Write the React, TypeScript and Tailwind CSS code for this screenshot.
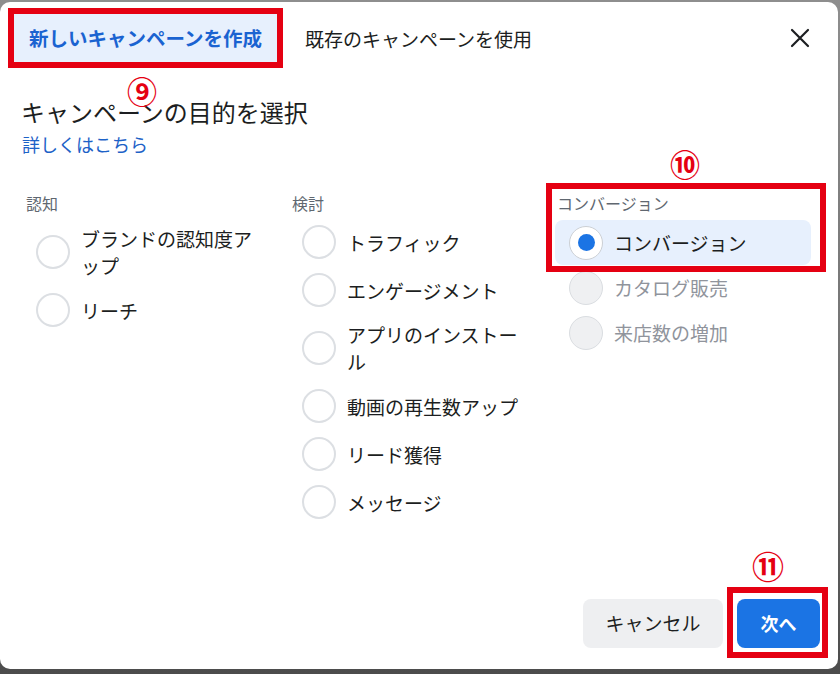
import React from "react";

type Opt = { label: string; disabled?: boolean; selected?: boolean };

const col1: Opt[] = [{ label: "ブランドの認知度アップ" }, { label: "リーチ" }];
const col2: Opt[] = [
  { label: "トラフィック" },
  { label: "エンゲージメント" },
  { label: "アプリのインストール" },
  { label: "動画の再生数アップ" },
  { label: "リード獲得" },
  { label: "メッセージ" },
];
const col3: Opt[] = [
  { label: "コンバージョン", selected: true },
  { label: "カタログ販売", disabled: true },
  { label: "来店数の増加", disabled: true },
];

function Radio({ selected, disabled }: { selected?: boolean; disabled?: boolean }) {
  if (selected) {
    return (
      <div className="w-[34px] h-[34px] shrink-0 rounded-full border-[1.5px] border-[#ccd0d5] bg-white flex items-center justify-center">
        <div className="w-[17px] h-[17px] rounded-full bg-[#1b74e4]" />
      </div>
    );
  }
  if (disabled) {
    return <div className="w-[34px] h-[34px] shrink-0 rounded-full border-[1.5px] border-[#dadde1] bg-[#eff0f2]" />;
  }
  return <div className="w-[34px] h-[34px] shrink-0 rounded-full border-2 border-[#dcdfe3] bg-white" />;
}

function Column({ title, items }: { title: string; items: Opt[] }) {
  return (
    <div className="flex flex-col">
      <div className="text-[16px] leading-[22px] text-[#606770]">{title}</div>
      <div className="mt-[4px] flex flex-col">
        {items.map((it) => (
          <div key={it.label} className="flex items-center gap-[11px] pl-[10px] py-[7px] min-h-[48px]">
            <Radio />
            <div className="text-[19px] leading-[27px] text-[#1c1e21] max-w-[180px] [line-break:loose]">
              {it.label}
            </div>
          </div>
        ))}
      </div>
    </div>
  );
}

function Column3({ title, items }: { title: string; items: Opt[] }) {
  return (
    <div className="flex flex-col">
      <div className="text-[16px] leading-[22px] text-[#606770] -ml-[1px]">{title}</div>
      <div className="mt-[6px] flex flex-col -ml-[3px] w-[256px]">
        {items.map((it) => (
          <div
            key={it.label}
            className={
              "flex items-center gap-[11px] pl-[14px] h-[45px] rounded-[8px] " +
              (it.selected ? "bg-[#e7f0fd]" : "")
            }
          >
            <Radio selected={it.selected} disabled={it.disabled} />
            <div
              className={
                "text-[19px] leading-[27px] " + (it.disabled ? "text-[#90949c]" : "text-[#1c1e21]")
              }
            >
              {it.label}
            </div>
          </div>
        ))}
      </div>
    </div>
  );
}

export default function App() {
  return (
    <div className="relative w-[840px] h-[674px] overflow-hidden bg-[linear-gradient(to_bottom,#8e8e8e,#707070_60%,#4c4c4c)] pt-[2px] font-['Noto_Sans_CJK_JP','Noto_Sans',sans-serif]">
      <div className="w-[838px] h-[667px] rounded-[10px] bg-white flex flex-col">
        {/* tabs */}
        <div className="flex items-center pt-[6px] pl-[8px] pr-[28px]">
          <div className="w-[275px] h-[60px] border-[6px] border-[#e50012] bg-[#e7f0fd] flex items-center justify-center">
            <span className="text-[19.5px] font-bold text-[#1a63d1] leading-none">新しいキャンペーンを作成</span>
          </div>
          <div className="ml-[22px] text-[19px] text-[#1c1e21] leading-none">既存のキャンペーンを使用</div>
          <div className="flex-1" />
          <svg width="20" height="20" viewBox="0 0 20 20" className="shrink-0">
            <path d="M2 2 L18 18 M18 2 L2 18" stroke="#1c1e21" strokeWidth="2.2" strokeLinecap="round" />
          </svg>
        </div>

        {/* heading */}
        <div className="pl-[21px] mt-[28px] text-[24px] leading-[32px] text-[#1c1e21]">キャンペーンの目的を選択</div>
        <div className="pl-[22px] mt-[3px] text-[18px] leading-[26px] text-[#1d62c7]">詳しくはこちら</div>

        {/* options */}
        <div className="mt-[35px] pl-[26px] grid grid-cols-[266px_266px_1fr]">
          <Column title="認知" items={col1} />
          <Column title="検討" items={col2} />
          <Column3 title="コンバージョン" items={col3} />
        </div>

        {/* footer */}
        <div className="mt-auto flex justify-end gap-[14px] pr-[18px] pb-[21px]">
          <button className="w-[140px] h-[49px] rounded-[8px] bg-[#eeeff1] text-[19px] text-[#1c1e21]">
            キャンセル
          </button>
          <button className="w-[83px] h-[49px] rounded-[8px] bg-[#1b74e4] text-[18px] font-bold text-white">
            次へ
          </button>
        </div>
      </div>

      {/* annotations */}
      <div className="absolute left-[127px] top-[74px] w-[30px] h-[32px] flex items-center justify-center text-[30px] leading-none font-bold text-[#e50012]">
        ⑨
      </div>
      <div className="absolute left-[670px] top-[147px] w-[30px] h-[32px] flex items-center justify-center text-[30px] leading-none font-bold text-[#e50012]">
        ⑩
      </div>
      <div className="absolute left-[546px] top-[183px] w-[280px] h-[89px] border-[6px] border-[#e50012]" />
      <div className="absolute left-[751px] top-[549px] w-[34px] h-[32px] flex items-center justify-center text-[32px] leading-none font-bold text-[#e50012]">
        ⑪
      </div>
      <div className="absolute left-[727px] top-[587px] w-[101px] h-[71px] border-[6px] border-[#e50012]" />
    </div>
  );
}
